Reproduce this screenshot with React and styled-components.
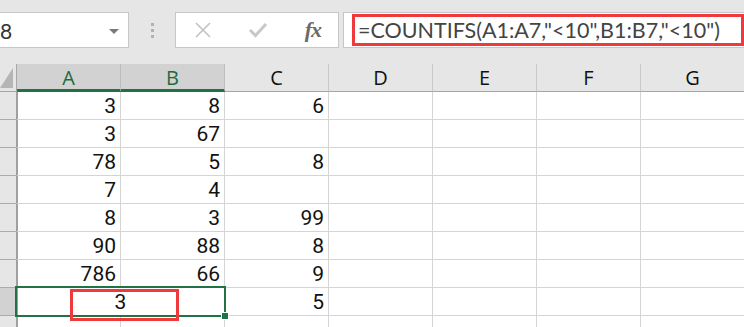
import React from "react";
import styled, { createGlobalStyle } from "styled-components";

const Global = createGlobalStyle`
  html, body { margin: 0; padding: 0; background: #ffffff; overflow: hidden; }
  #root { width: 744px; height: 327px; overflow: hidden; }
`;

const Page = styled.div`
  width: 744px;
  height: 327px;
  overflow: hidden;
  background: #ffffff;
  display: flex;
  flex-direction: column;
`;

const Toolbar = styled.div`
  height: 64px;
  flex: none;
  background: #e6e6e6;
  display: flex;
  align-items: flex-start;
  padding-top: 12px;
  box-sizing: border-box;
`;

const NameBox = styled.div`
  margin-left: -2px;
  width: 131px;
  height: 36px;
  box-sizing: border-box;
  background: #ffffff;
  border: 1px solid #c6c6c6;
  display: flex;
  align-items: center;
  justify-content: space-between;
  padding: 0 9px 0 1px;
  font-family: Lato, "Noto Sans", sans-serif;
  font-size: 21px;
  color: #333;
`;

const Caret = styled.span`
  width: 0;
  height: 0;
  border-left: 5px solid transparent;
  border-right: 5px solid transparent;
  border-top: 5px solid #7a7a7a;
  margin-top: 2px;
`;

const Grip = styled.div`
  width: 46px;
  height: 36px;
  display: flex;
  flex-direction: column;
  align-items: center;
  justify-content: center;
  gap: 3px;
`;

const Dot = styled.span`
  width: 3px;
  height: 3px;
  background: #b2b2b2;
`;

const Buttons = styled.div`
  width: 164px;
  height: 36px;
  box-sizing: border-box;
  background: #ffffff;
  border: 1px solid #c6c6c6;
  display: flex;
  align-items: center;
  justify-content: space-between;
  padding: 0 17px 0 18px;
`;

const Fx = styled.span`
  font-family: "Liberation Serif", "DejaVu Serif", serif;
  font-style: italic;
  font-weight: bold;
  font-size: 22px;
  color: #6a6a6a;
  letter-spacing: -1px;
`;

const FormulaInput = styled.div`
  margin-left: 4px;
  flex: 1;
  height: 36px;
  box-sizing: border-box;
  background: #ffffff;
  border: 1px solid #c6c6c6;
  border-right: none;
  padding: 1px 0 1px 8px;
  display: flex;
`;

const Highlight = styled.div`
  flex: 1;
  border: 3px solid #ee3a3a;
  display: flex;
  align-items: center;
  padding-left: 3px;
  font-family: Lato, "Noto Sans", sans-serif;
  font-size: 21.5px;
  color: #444;
  white-space: nowrap;
`;

const Grid = styled.div`
  display: grid;
  grid-template-columns: 17px repeat(7, 104px);
  grid-auto-rows: 28px;
  width: 745px;
`;

const Corner = styled.div`
  background: #e6e6e6;
  border-right: 1px solid #a6a6a6;
  border-bottom: 1px solid #a6a6a6;
  box-sizing: border-box;
  display: flex;
  align-items: flex-end;
  padding-bottom: 3px;
`;

const Tri = styled.div`
  width: 0;
  height: 0;
  border-left: 13px solid transparent;
  border-bottom: 20px solid #b5b5b5;
`;

const ColHead = styled.div`
  background: ${(p) => (p.$sel ? "#d2d2d2" : "#e6e6e6")};
  border-right: 1px solid ${(p) => (p.$sel ? "#bdbdbd" : "#c8c8c8")};
  border-bottom: ${(p) => (p.$sel ? "3px solid #217346" : "1px solid #a6a6a6")};
  box-sizing: border-box;
  display: flex;
  align-items: center;
  justify-content: center;
  padding-top: ${(p) => (p.$sel ? "2px" : "0")};
  font-family: "Open Sans", "Noto Sans", sans-serif;
  font-size: 20px;
  color: ${(p) => (p.$sel ? "#1f6b40" : "#111")};
`;

const RowHead = styled.div`
  background: ${(p) => (p.$sel ? "#d2d2d2" : "#e6e6e6")};
  border-right: 2px solid #a0a0a0;
  border-bottom: 1px solid #ababab;
  box-sizing: border-box;
  margin-right: -1px;
`;

const Cell = styled.div`
  border-right: 1px solid #d4d4d4;
  border-bottom: 1px solid #d4d4d4;
  box-sizing: border-box;
  display: flex;
  align-items: center;
  justify-content: flex-end;
  padding-right: 4px;
  font-family: Roboto, "Noto Sans", sans-serif;
  font-size: 21px;
  color: #111;
`;

const Merged = styled(Cell)`
  grid-column: span 2;
  justify-content: center;
  padding-right: 0;
  position: relative;
`;

const SelFrame = styled.div`
  position: absolute;
  left: -2px;
  top: -2px;
  right: -2px;
  bottom: -2px;
  border: 2px solid #217346;
  pointer-events: none;
`;

const Handle = styled.div`
  position: absolute;
  right: -5px;
  bottom: -5px;
  width: 6px;
  height: 6px;
  background: #217346;
  border: 1px solid #fff;
`;

const RedBox = styled.div`
  position: absolute;
  left: 53px;
  top: 1px;
  width: 109px;
  height: 32px;
  box-sizing: border-box;
  border: 3px solid #ee3a3a;
`;

const cols = ["A", "B", "C", "D", "E", "F", "G"];
const data = [
  [3, 8, 6],
  [3, 67, ""],
  [78, 5, 8],
  [7, 4, ""],
  [8, 3, 99],
  [90, 88, 8],
  [786, 66, 9],
];

const X = () => (
  <svg width="18" height="18" viewBox="0 0 18 18">
    <path d="M2 2 L16 16 M16 2 L2 16" stroke="#c2c2c2" strokeWidth="1.6" fill="none" />
  </svg>
);

const Check = () => (
  <svg width="20" height="16" viewBox="0 0 20 16">
    <path d="M2 8 L7.5 13.5 L18 2" stroke="#c8c8c8" strokeWidth="3" fill="none" />
  </svg>
);

export default function App() {
  return (
    <Page>
      <Global />
      <Toolbar>
        <NameBox>
          <span>8</span>
          <Caret />
        </NameBox>
        <Grip>
          <Dot />
          <Dot />
          <Dot />
        </Grip>
        <Buttons>
          <X />
          <Check />
          <Fx>fx</Fx>
        </Buttons>
        <FormulaInput>
          <Highlight>=COUNTIFS(A1:A7,"&lt;10",B1:B7,"&lt;10")</Highlight>
        </FormulaInput>
      </Toolbar>
      <Grid>
        <Corner>
          <Tri />
        </Corner>
        {cols.map((c, i) => (
          <ColHead key={c} $sel={i < 2}>
            {c}
          </ColHead>
        ))}
        {data.map((row, r) => (
          <React.Fragment key={r}>
            <RowHead />
            {cols.map((c, i) => (
              <Cell key={c}>{i < 3 ? row[i] : ""}</Cell>
            ))}
          </React.Fragment>
        ))}
        <RowHead $sel />
        <Merged>
          3
          <SelFrame />
          <Handle />
          <RedBox />
        </Merged>
        <Cell>5</Cell>
        <Cell />
        <Cell />
        <Cell />
        <Cell />
        <RowHead />
        {cols.map((c) => (
          <Cell key={c} />
        ))}
      </Grid>
    </Page>
  );
}
